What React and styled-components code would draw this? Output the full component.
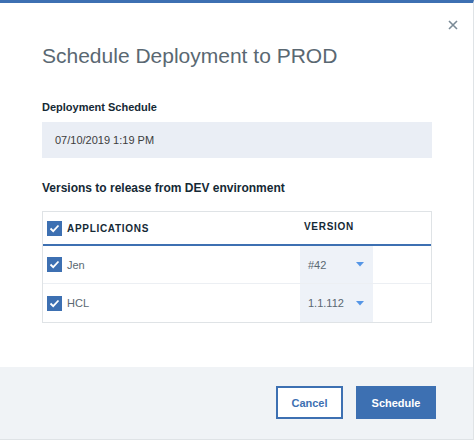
import React from "react";
import styled, { createGlobalStyle } from "styled-components";

const Global = createGlobalStyle`
  html, body { margin: 0; padding: 0; background: #ffffff; }
  body { font-family: "Liberation Sans", Arial, sans-serif; }
  * { box-sizing: border-box; }
`;

const Modal = styled.div`
  width: 474px;
  height: 440px;
  display: flex;
  flex-direction: column;
  background: #ffffff;
  border-top: 3px solid #3d70b2;
  border-right: 1px solid #dfe3e6;
  border-bottom: 1px solid #dfe3e6;
  position: relative;
`;

const Close = styled.button`
  position: absolute;
  top: 14px;
  right: 12px;
  width: 16px;
  height: 16px;
  padding: 0;
  border: 0;
  background: transparent;
  display: flex;
  align-items: center;
  justify-content: center;
`;

const Content = styled.div`
  padding: 41px 41px 0 42px;
  display: flex;
  flex-direction: column;
`;

const Title = styled.h2`
  margin: 0;
  font-size: 21px;
  line-height: 24px;
  font-weight: 400;
  color: #5a6872;
`;

const Label = styled.div`
  margin-top: ${(p) => p.$mt}px;
  font-size: ${(p) => p.$size}px;
  line-height: 16px;
  font-weight: 700;
  color: #152935;
`;

const Input = styled.div`
  margin-top: 7px;
  height: 36px;
  background: #eaeef5;
  display: flex;
  align-items: center;
  padding-left: 13px;
  font-size: 11px;
  color: #3d3d3d;
`;

const Table = styled.div`
  margin-top: 15px;
  border: 1px solid #dfe3e6;
  display: flex;
  flex-direction: column;
`;

const Row = styled.div`
  display: grid;
  grid-template-columns: 257px 1fr;
  height: ${(p) => p.$h}px;
  border-bottom: ${(p) => (p.$head ? "2px solid #3d70b2" : p.$last ? "0" : "1px solid #eceff3")};
`;

const Cell = styled.div`
  display: flex;
  align-items: center;
  gap: 5px;
  padding-left: ${(p) => p.$pl || 0}px;
`;

const HeadText = styled.span`
  font-size: 10px;
  font-weight: 700;
  letter-spacing: 0.7px;
  color: #152935;
  margin-top: ${(p) => p.$mt || 0}px;
`;

const RowText = styled.span`
  font-size: 11px;
  color: #5a6872;
`;

const Box = styled.span`
  width: 15px;
  height: 15px;
  background: #3d70b2;
  display: inline-flex;
  align-items: center;
  justify-content: center;
  flex: none;
`;

const Select = styled.div`
  width: 73px;
  height: 100%;
  background: #eef2f8;
  display: flex;
  align-items: center;
  justify-content: space-between;
  padding: 0 9px 0 8px;
  font-size: 11px;
  color: #5a6872;
`;

const Footer = styled.div`
  margin-top: auto;
  height: 72px;
  background: #f0f3f6;
  display: flex;
  align-items: center;
  justify-content: flex-end;
  gap: 13px;
  padding-right: 37px;
  padding-bottom: 1px;
`;

const Button = styled.button`
  height: 33px;
  width: ${(p) => p.$w}px;
  font-family: "Liberation Sans", Arial, sans-serif;
  font-size: 11px;
  font-weight: 700;
  border: 2px solid #3d70b2;
  background: ${(p) => (p.$primary ? "#3d70b2" : "#ffffff")};
  color: ${(p) => (p.$primary ? "#ffffff" : "#3d70b2")};
  padding: 0;
`;

const Check = () => (
  <Box>
    <svg width="11" height="9" viewBox="0 0 11 9">
      <path d="M1.5 4.5 L4.2 7.2 L9.5 1.5" fill="none" stroke="#fff" strokeWidth="1.8" />
    </svg>
  </Box>
);

const Caret = () => (
  <svg width="8" height="5" viewBox="0 0 8 5">
    <path d="M0 0 H8 L4 4.5 Z" fill="#5596e6" />
  </svg>
);

const rows = [
  { name: "Jen", version: "#42", h: 38 },
  { name: "HCL", version: "1.1.112", h: 38 },
];

export default function App() {
  return (
    <>
      <Global />
      <Modal>
        <Close aria-label="close">
          <svg width="10" height="10" viewBox="0 0 10 10">
            <path d="M1 1 L9 9 M9 1 L1 9" stroke="#7a8a96" strokeWidth="1.6" />
          </svg>
        </Close>
        <Content>
          <Title>Schedule Deployment to PROD</Title>
          <Label $mt={31} $size={11}>Deployment Schedule</Label>
          <Input>07/10/2019 1:19 PM</Input>
          <Label $mt={22} $size={12}>Versions to release from DEV environment</Label>
          <Table>
            <Row $head $h={34}>
              <Cell $pl={4}>
                <Check />
                <HeadText $mt={1}>APPLICATIONS</HeadText>
              </Cell>
              <Cell $pl={4}>
                <HeadText $mt={-3}>VERSION</HeadText>
              </Cell>
            </Row>
            {rows.map((r, i) => (
              <Row key={r.name} $h={r.h} $last={i === rows.length - 1}>
                <Cell $pl={4}>
                  <Check />
                  <RowText>{r.name}</RowText>
                </Cell>
                <Cell>
                  <Select>
                    <span>{r.version}</span>
                    <Caret />
                  </Select>
                </Cell>
              </Row>
            ))}
          </Table>
        </Content>
        <Footer>
          <Button $w={67}>Cancel</Button>
          <Button $primary $w={80}>Schedule</Button>
        </Footer>
      </Modal>
    </>
  );
}
